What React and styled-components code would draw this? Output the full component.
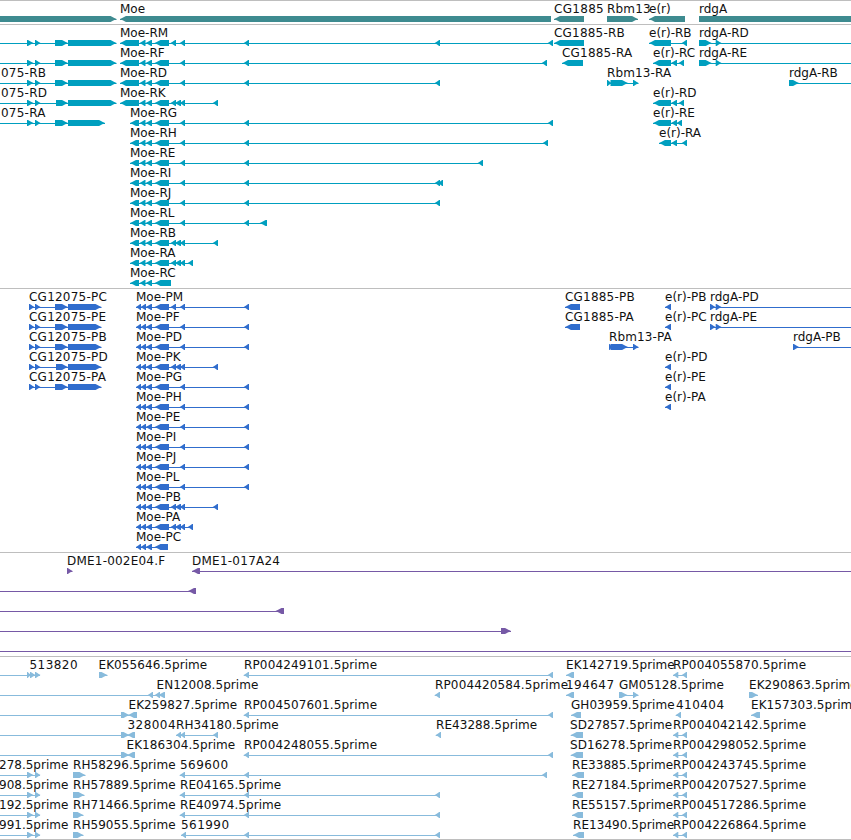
import styled, { createGlobalStyle } from 'styled-components'

const VIEW_WIDTH = 851
const HEAD = 7

// exons shared by most of the isoforms, in view coordinates
const CG_MID = [[27, 33.5], [35, 40.5]]
const MOE_BODY = [[139.5, 145.5], [145.5, 152], [154.5, 169]]
const MOE_P_BODY = [[136, 141], [140.5, 146], [145.5, 152], [154.5, 169]]
const MOE_TAIL = [[179.7, 185], [243.7, 249]]
const MOE_TRIPLE = [[170.5, 176], [174.5, 181], [179.7, 185]]
const M435 = [434.7, 440]
const M541 = [541.7, 547]
const M548 = [547.7, 553]
const M212 = [212.7, 218]
const M187 = [187.7, 193]

const feature = (dir, label, x, parts, line) => ({ dir, label, x, parts, line })
const fwd = (label, x, parts, line) => feature('right', label, x, parts, line)
const rev = (label, x, parts, line) => feature('left', label, x, parts, line)

const cgTranscript = (label, third = 55, end = 116.5) =>
  fwd(label, 1, [...CG_MID, [third, 68], [68, end]], [0, end])
const moeR = (name, start, ...rest) =>
  rev(`Moe-${name}`, start, [[start, 139], ...MOE_BODY, ...rest])
const cgProtein = (name, third = 55) =>
  fwd(`CG12075-${name}`, 29, [[29, 34.5], [35, 40.5], [third, 68], [68, 101.5]])
const moeP = (name, ...rest) =>
  rev(`Moe-${name}`, 136, [...MOE_P_BODY, ...rest])
const er = (name, x, ...rest) => rev(`e(r)-${name}`, x, [[x, 671], ...rest])
const erP = name => rev(`e(r)-${name}`, 665, [[665, 671]])
const rdgR = name =>
  fwd(`rdgA-${name}`, 699, [[699, 711.7], [715.7, 721.5]], [699, VIEW_WIDTH])
const rdgP = name =>
  fwd(`rdgA-${name}`, 710, [[710, 715.5], [715.7, 721.5]], [710, VIEW_WIDTH])
const rp = id => rev(`RP${id}.5prime`, 673, [[673, 678.3], [681.7, 687]])
const rpLong = id => rev(`RP${id}.5prime`, 244, [[243.7, 249], M548])
const cgPrime = id => fwd(`${id}.5prime`, -1, CG_MID, [0, 40])

const tracks = [
  {
    name: 'genes',
    color: '#3e8b90',
    rows: [
      [
        fwd('', 0, [[-20, 116.5]]),
        rev('Moe', 120, [[120, 551]]),
        rev('CG1885', 554, [[554, 584]]),
        fwd('Rbm13', 607, [[607, 638]]),
        rev('e(r)', 649, [[649, 685]]),
        fwd('rdgA', 699, [[699, 880]]),
      ],
    ],
  },
  {
    name: 'transcripts',
    color: '#009fbf',
    rows: [
      [
        cgTranscript(''),
        moeR('RM', 120, [170.5, 176], ...MOE_TAIL, M435, M548),
        rev('CG1885-RB', 554, [[554, 584]]),
        er('RB', 649, [681.7, 687]),
        rdgR('RD'),
      ],
      [
        cgTranscript(''),
        moeR('RF', 120, ...MOE_TAIL, M541),
        rev('CG1885-RA', 562, [[562, 583]]),
        er('RC', 653, [671, 677], [678.5, 684]),
        rdgR('RE'),
      ],
      [
        cgTranscript('075-RB'),
        moeR('RD', 120, ...MOE_TAIL, M435),
        fwd('Rbm13-RA', 607, [[607, 611.5], [610.5, 628], [633, 638.5]]),
        fwd('rdgA-RB', 789, [[789, 799]], [789, VIEW_WIDTH]),
      ],
      [
        cgTranscript('075-RD', 56),
        moeR('RK', 120, ...MOE_TRIPLE, M212),
        er('RD', 653, [671, 677], [678.5, 684]),
      ],
      [
        cgTranscript('075-RA', 55, 105),
        moeR('RG', 130, ...MOE_TAIL, M548),
        er('RE', 653, [671, 677], [676.5, 682]),
      ],
      [
        moeR('RH', 130, ...MOE_TAIL, [542.7, 548]),
        er('RA', 659, [671, 677], [681.7, 687]),
      ],
      [moeR('RE', 130, ...MOE_TAIL, [477.7, 483])],
      [moeR('RI', 130, ...MOE_TAIL, M435, [437.7, 443])],
      [moeR('RJ', 130, ...MOE_TAIL, M435)],
      [moeR('RL', 130, ...MOE_TAIL, [259.7, 267])],
      [moeR('RB', 130, ...MOE_TRIPLE, M212)],
      [moeR('RA', 130, ...MOE_TRIPLE, M187)],
      [rev('Moe-RC', 130, [[130, 139], ...MOE_BODY.slice(0, 2), [154.5, 171]])],
    ],
  },
  {
    name: 'proteins',
    color: '#306dcd',
    rows: [
      [
        cgProtein('PC'),
        moeP('PM', [170.5, 176], ...MOE_TAIL),
        rev('CG1885-PB', 565, [[565, 580]]),
        erP('PB'),
        rdgP('PD'),
      ],
      [
        cgProtein('PE'),
        moeP('PF', ...MOE_TAIL),
        rev('CG1885-PA', 565, [[565, 580]]),
        erP('PC'),
        rdgP('PE'),
      ],
      [
        cgProtein('PB'),
        moeP('PD', ...MOE_TAIL),
        fwd('Rbm13-PA', 609, [[609, 612.5], [610.5, 628], [633, 638.5]]),
        fwd('rdgA-PB', 793, [[793, 799]], [793, VIEW_WIDTH]),
      ],
      [cgProtein('PD', 56), moeP('PK', ...MOE_TRIPLE, M212), erP('PD')],
      [cgProtein('PA'), moeP('PG', ...MOE_TAIL), erP('PE')],
      [moeP('PH', ...MOE_TAIL), erP('PA')],
      [moeP('PE', ...MOE_TAIL)],
      [moeP('PI', ...MOE_TAIL)],
      [moeP('PJ', ...MOE_TAIL)],
      [moeP('PL', ...MOE_TAIL)],
      [moeP('PB', ...MOE_TRIPLE, M212)],
      [moeP('PA', ...MOE_TRIPLE, M187)],
      [rev('Moe-PC', 136, [...MOE_P_BODY.slice(0, 3), [154.5, 168]])],
    ],
  },
  {
    name: 'clones',
    color: '#7659a6',
    rows: [
      [
        fwd('DME1-002E04.F', 67, [[67, 72.5]]),
        rev('DME1-017A24', 192, [[192, 200]], [192, VIEW_WIDTH]),
      ],
      [rev('', 0, [[188, 196]], [0, 196])],
      [rev('', 0, [[275.5, 284]], [0, 284])],
      [fwd('', 0, [[501, 511]], [0, 511])],
      [fwd('', 0, [], [0, VIEW_WIDTH])],
    ],
  },
  {
    name: 'ests',
    color: '#88bbdc',
    rows: [
      [
        fwd('513820', 29.5, [[27, 31], [30, 35.5], [35, 40.5]], [0, 40]),
        fwd('EK055646.5prime', 98.5, [[99, 107.5]]),
        rpLong('004249101'),
        rev('EK142719.5prime', 566, [[566, 574]]),
        rp('004055870'),
      ],
      [
        rev('EN12008.5prime', 156.5, [[147.7, 153], [154.7, 160], [158, 165]], [0, 165]),
        rev('RP004420584.5prime', 435, [M435]),
        rev('194647', 566, [[566, 574]]),
        fwd('GM05128.5prime', 619, [[619, 627.5], [633, 638.5]]),
        fwd('EK290863.5prime', 749, [[749, 758]]),
      ],
      [
        fwd('', 0, [[121, 129.5]], [0, 129]),
        rev('EK259827.5prime', 128.5, [[128, 137]]),
        rpLong('004507601'),
        rev('GH03959.5prime', 571, [[571, 581]]),
        rev('410404', 676, [[675.7, 681]]),
        rev('EK157303.5prime', 751, [[751, 760]]),
      ],
      [
        fwd('', 0, [[121, 129.5]], [0, 129]),
        rev('328004', 127.5, [[127, 135]]),
        rev('RH34180.5prime', 176, [[176, 181], [180, 185], M212]),
        rev('RE43288.5prime', 436, [[435.7, 441]]),
        rev('SD27857.5prime', 570, [[570.7, 583]]),
        rp('004042142'),
      ],
      [
        fwd('', 0, [[121, 129.5]], [0, 129]),
        rev('EK186304.5prime', 126.5, [[127, 135]]),
        rpLong('004248055'),
        rev('SD16278.5prime', 570, [[570.7, 583]]),
        rp('004298052'),
      ],
      [
        cgPrime('278'),
        fwd('RH58296.5prime', 73, [[73, 85.5]]),
        rev('569600', 180, [...MOE_TAIL, M541]),
        rev('RE33885.5prime', 572, [[572, 584]]),
        rp('004243745'),
      ],
      [
        cgPrime('908'),
        fwd('RH57889.5prime', 73, [[73, 84.5]]),
        rev('RE04165.5prime', 180, [...MOE_TAIL, M435]),
        rev('RE27184.5prime', 572, [[572, 583]]),
        rp('004207527'),
      ],
      [
        cgPrime('192'),
        fwd('RH71466.5prime', 73, [[73, 83.5]]),
        rev('RE40974.5prime', 180, [...MOE_TAIL, M435]),
        rev('RE55157.5prime', 572, [[572, 583]]),
        rp('004517286'),
      ],
      [
        cgPrime('991'),
        fwd('RH59055.5prime', 73, [[73, 83.5]]),
        rev('561990', 181, [[181, 186], [243.7, 249], M435]),
        rev('RE13490.5prime', 573, [[573, 584]]),
        rp('004226864'),
      ],
    ],
  },
]

const arrowPoints = ([start, end], dir) => {
  const head = Math.min(HEAD, end - start)
  const tip = dir === 'left' ? start : end
  const back = dir === 'left' ? end : start
  const sign = dir === 'left' ? 1 : -1
  const mid = tip + sign * head * 0.45
  const full = tip + sign * head * 0.85
  return `${tip},3 ${mid},1.4 ${full},0 ${back},0 ${back},6 ${full},6 ${mid},4.6`
}

const lineOf = ({ line, parts }) =>
  line || [parts[0][0], parts[parts.length - 1][1]]

const getSpacing = label => {
  const digits = (label.match(/\d/g) || []).length
  const suffix = label.endsWith('prime') ? 2 : 0
  return Math.max(0, (digits * 0.45 - suffix) / label.length).toFixed(3)
}

function FeatureRow({ features }) {
  return (
    <Row>
      <Labels>
        {features
          .filter(item => item.label)
          .map(item => (
            <Label
              key={item.label}
              style={{ left: item.x, letterSpacing: `${getSpacing(item.label)}px` }}
            >
              {item.label}
            </Label>
          ))}
      </Labels>
      <Glyphs viewBox={`0 0 ${VIEW_WIDTH} 6`}>
        {features.map((item, i) => {
          const [from, to] = lineOf(item)
          return (
            <g key={i}>
              <rect x={from} y="3" width={to - from} height="1" />
              {item.parts.map((part, j) => (
                <polygon key={j} points={arrowPoints(part, item.dir)} />
              ))}
            </g>
          )
        })}
      </Glyphs>
    </Row>
  )
}

export default function App() {
  return (
    <>
      <GlobalStyle />
      <Browser>
        {tracks.map(track => (
          <Track key={track.name} $color={track.color}>
            {track.rows.map((features, i) => (
              <FeatureRow key={i} features={features} />
            ))}
          </Track>
        ))}
      </Browser>
    </>
  )
}

const GlobalStyle = createGlobalStyle`
  * {
    box-sizing: border-box;
  }
  body {
    margin: 0;
    background: #fff;
  }
`

const Browser = styled.main`
  display: flex;
  flex-direction: column;
  width: 851px;
  height: 840px;
  overflow: hidden;
  border-bottom: 1px solid #bebebe;
  font-family: 'DejaVu Sans', sans-serif;
  font-size: 12px;
  color: #000;
`

const Track = styled.section`
  display: flex;
  flex-direction: column;
  flex-shrink: 0;
  padding: 1px 0 2px;
  border-top: 1px solid #bebebe;
  color: ${props => props.$color};
`

const Row = styled.div`
  display: flex;
  flex-direction: column;
  height: 20px;
`

const Labels = styled.div`
  position: relative;
  height: 14px;
`

/* labels sit at the genomic start of their feature */
const Label = styled.span`
  position: absolute;
  top: 0;
  line-height: 14px;
  white-space: nowrap;
  color: #111;
`

const Glyphs = styled.svg`
  display: block;
  width: 851px;
  height: 6px;
  fill: currentColor;
`
